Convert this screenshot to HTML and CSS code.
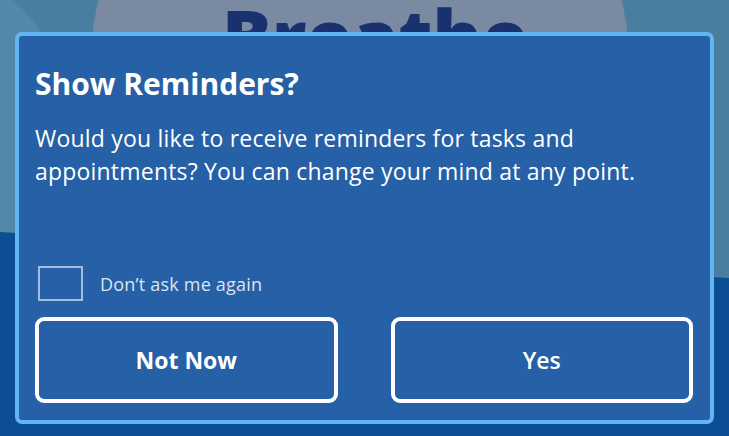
FILE: index.html
```html
<!DOCTYPE html>
<html>
<head>
<meta charset="utf-8">
<link rel="stylesheet" href="styles.css">
</head>
<body>
<div class="scene">
  <div class="bg-light"></div>
  <div class="bg-dark"></div>
  <div class="bg-circle"></div>
  <div class="brand">Breathe</div>
  <div class="dialog">
    <h1 class="title">Show Reminders?</h1>
    <p class="message">Would you like to receive reminders for tasks and appointments? You can change your mind at any point.</p>
    <label class="check-row">
      <span class="checkbox"></span>
      <span class="check-label">Don’t ask me again</span>
    </label>
    <div class="actions">
      <button class="btn btn-primary">Not Now</button>
      <button class="btn btn-secondary">Yes</button>
    </div>
  </div>
</div>
</body>
</html>
```

FILE: styles.css
```css
* { box-sizing: border-box; }
html, body { margin: 0; padding: 0; }
body {
  width: 729px;
  height: 436px;
  overflow: hidden;
  font-family: "Open Sans", "Noto Sans", sans-serif;
  background: #4a7ea0;
}
.scene {
  position: relative;
  width: 729px;
  height: 436px;
  overflow: hidden;
  padding: 32px 15px 0 15px;
  background: #4a7ea0;
}
.bg-light {
  position: absolute;
  left: -260px;
  top: -40px;
  width: 330px;
  height: 330px;
  border-radius: 50%;
  background: #5388a8;
}
.bg-dark {
  position: absolute;
  left: 0;
  top: 0;
  width: 729px;
  height: 436px;
  background: #0c4e96;
  clip-path: polygon(0 232px, 729px 278px, 729px 436px, 0 436px);
}
.bg-circle {
  position: absolute;
  left: 91px;
  top: -206px;
  width: 538px;
  height: 538px;
  border-radius: 50%;
  background: #7a8aa2;
}
.brand {
  position: absolute;
  left: 222px;
  top: -14px;
  font-family: "Open Sans", sans-serif;
  font-weight: 800;
  font-size: 74px;
  line-height: 100px;
  color: #1a3170;
}
.dialog {
  position: relative;
  width: 699px;
  height: 392px;
  border: 4px solid #63b5f2;
  border-radius: 7px;
  background: #2660a6;
  padding: 30px 17px 17px 16px;
  display: flex;
  flex-direction: column;
  color: #fff;
}
.title {
  margin: 0;
  font-size: 30px;
  font-weight: 700;
  line-height: 36px;
}
.message {
  margin: 20px 0 0 0;
  font-size: 23px;
  line-height: 33px;
  font-weight: 400;
  letter-spacing: 0.2px;
  max-width: 620px;
}
.check-row {
  margin-top: auto;
  display: flex;
  align-items: center;
  gap: 17px;
  padding-left: 3px;
}
.checkbox {
  width: 45px;
  height: 35px;
  border: 2px solid #a4bbde;
}
.check-label {
  font-size: 18px;
  letter-spacing: 0.2px;
  color: #dbe4f1;
}
.actions {
  margin-top: 16px;
  display: flex;
  gap: 53px;
}
.btn {
  flex: 1;
  height: 86px;
  border: 4px solid #ffffff;
  border-radius: 9px;
  background: #2660a6;
  color: #fff;
  font-family: "Open Sans", "Noto Sans", sans-serif;
  font-size: 23px;
}
.btn-primary { font-weight: 700; }
.btn-secondary { font-weight: 600; }
```
